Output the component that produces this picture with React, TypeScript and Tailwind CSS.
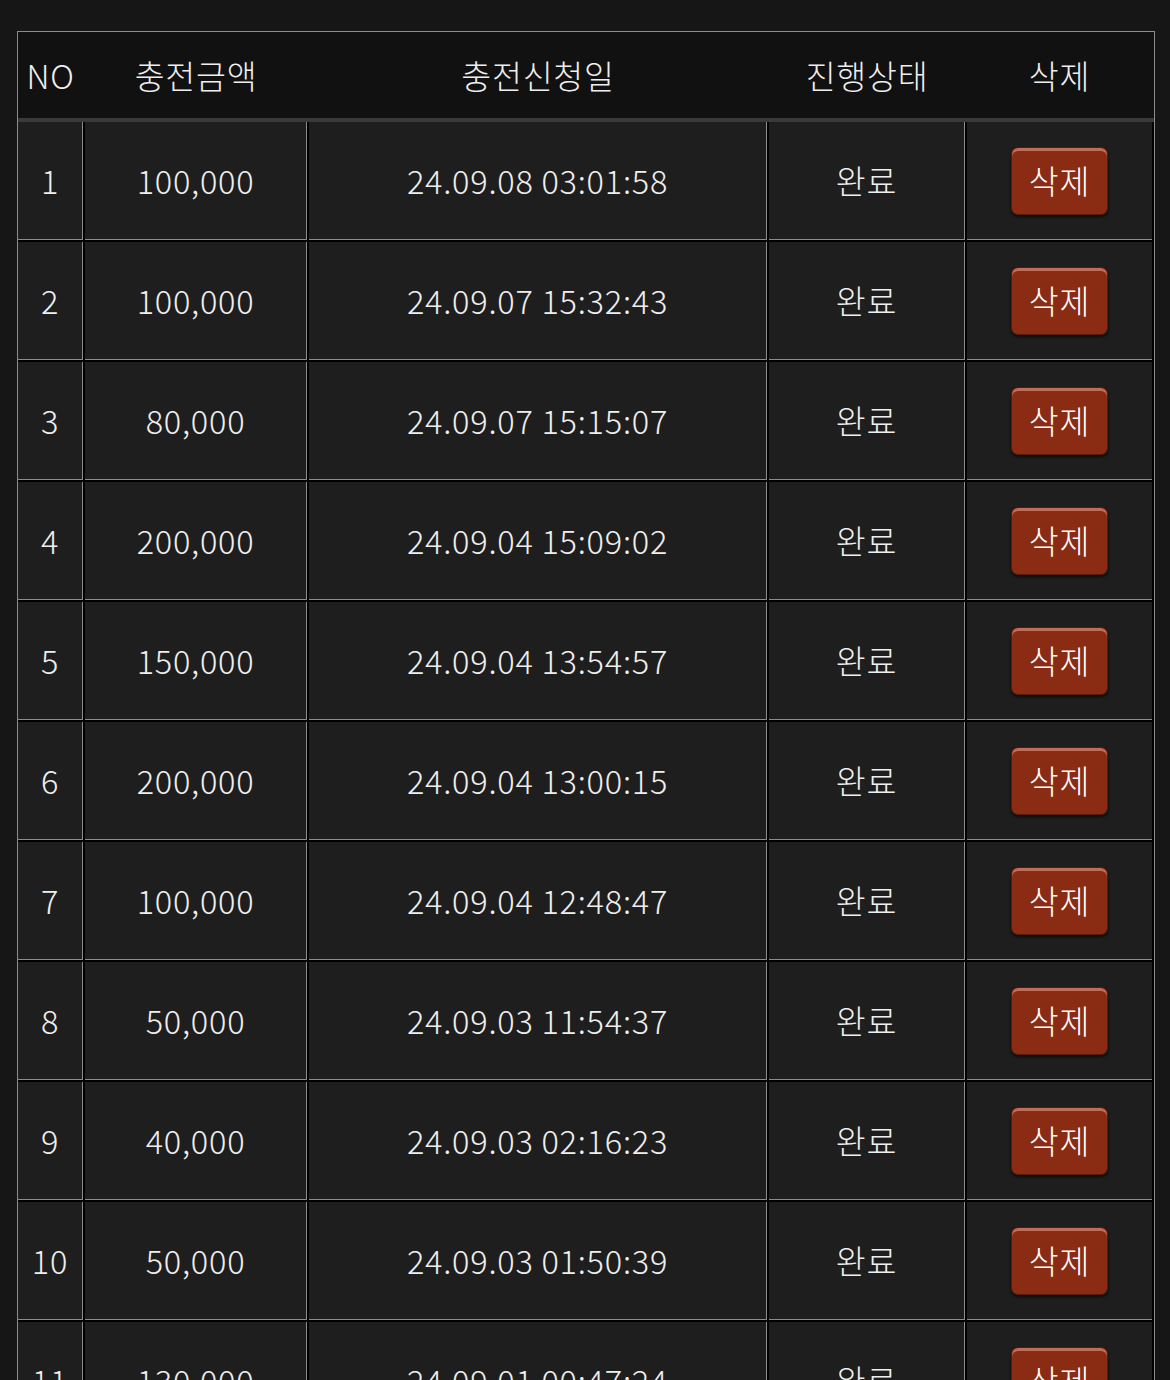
const rows = [
  { no: 1, amount: "100,000", date: "24.09.08 03:01:58" },
  { no: 2, amount: "100,000", date: "24.09.07 15:32:43" },
  { no: 3, amount: "80,000", date: "24.09.07 15:15:07" },
  { no: 4, amount: "200,000", date: "24.09.04 15:09:02" },
  { no: 5, amount: "150,000", date: "24.09.04 13:54:57" },
  { no: 6, amount: "200,000", date: "24.09.04 13:00:15" },
  { no: 7, amount: "100,000", date: "24.09.04 12:48:47" },
  { no: 8, amount: "50,000", date: "24.09.03 11:54:37" },
  { no: 9, amount: "40,000", date: "24.09.03 02:16:23" },
  { no: 10, amount: "50,000", date: "24.09.03 01:50:39" },
  { no: 11, amount: "130,000", date: "24.09.01 00:47:24" },
  { no: 12, amount: "100,000", date: "24.08.31 22:10:05" },
]

const cols = "grid grid-cols-[65px_222px_458px_196px_185px] gap-x-[2px]"
const cell = "flex items-center justify-center bg-[#1e1e1e] border-b border-[#8c8c8c]"

export default function App() {
  return (
    <div
      className="h-[1380px] overflow-hidden bg-[#161616] pt-[31px] pl-[17px]"
      style={{ fontFamily: '"Noto Sans CJK KR", "Noto Sans", sans-serif' }}
    >
      <div className="w-[1138px] border-t border-x border-[#8c8c8c] bg-black text-[32.5px] tracking-[0.75px] font-light text-[#efefef]">
        <div className={`${cols} h-[90px] bg-[#111111] border-b-4 border-[#3a3a3a] pr-[2px]`}>
          <div className="flex items-center justify-center">NO</div>
          <div className="flex items-center justify-center">충전금액</div>
          <div className="flex items-center justify-center">충전신청일</div>
          <div className="flex items-center justify-center">진행상태</div>
          <div className="flex items-center justify-center">삭제</div>
        </div>

        <div className="flex flex-col gap-y-[2px] pr-[2px]">
          {rows.map((row) => (
            <div key={row.no} className={`${cols} h-[118px]`}>
              <div className={`${cell} border-r`}>{row.no}</div>
              <div className={`${cell} border-r`}>{row.amount}</div>
              <div className={`${cell} border-r`}>{row.date}</div>
              <div className={`${cell} border-r`}>완료</div>
              <div className={cell}>
                <button className="h-[68px] w-[97px] rounded-[7px] border border-[#5a1a0a] bg-[#8a2b13] text-[32.5px] tracking-[0.75px] font-light text-white shadow-[inset_0_3px_0_rgba(255,190,170,0.45),0_2px_3px_rgba(0,0,0,0.6)]">
                  삭제
                </button>
              </div>
            </div>
          ))}
        </div>
      </div>
    </div>
  )
}
